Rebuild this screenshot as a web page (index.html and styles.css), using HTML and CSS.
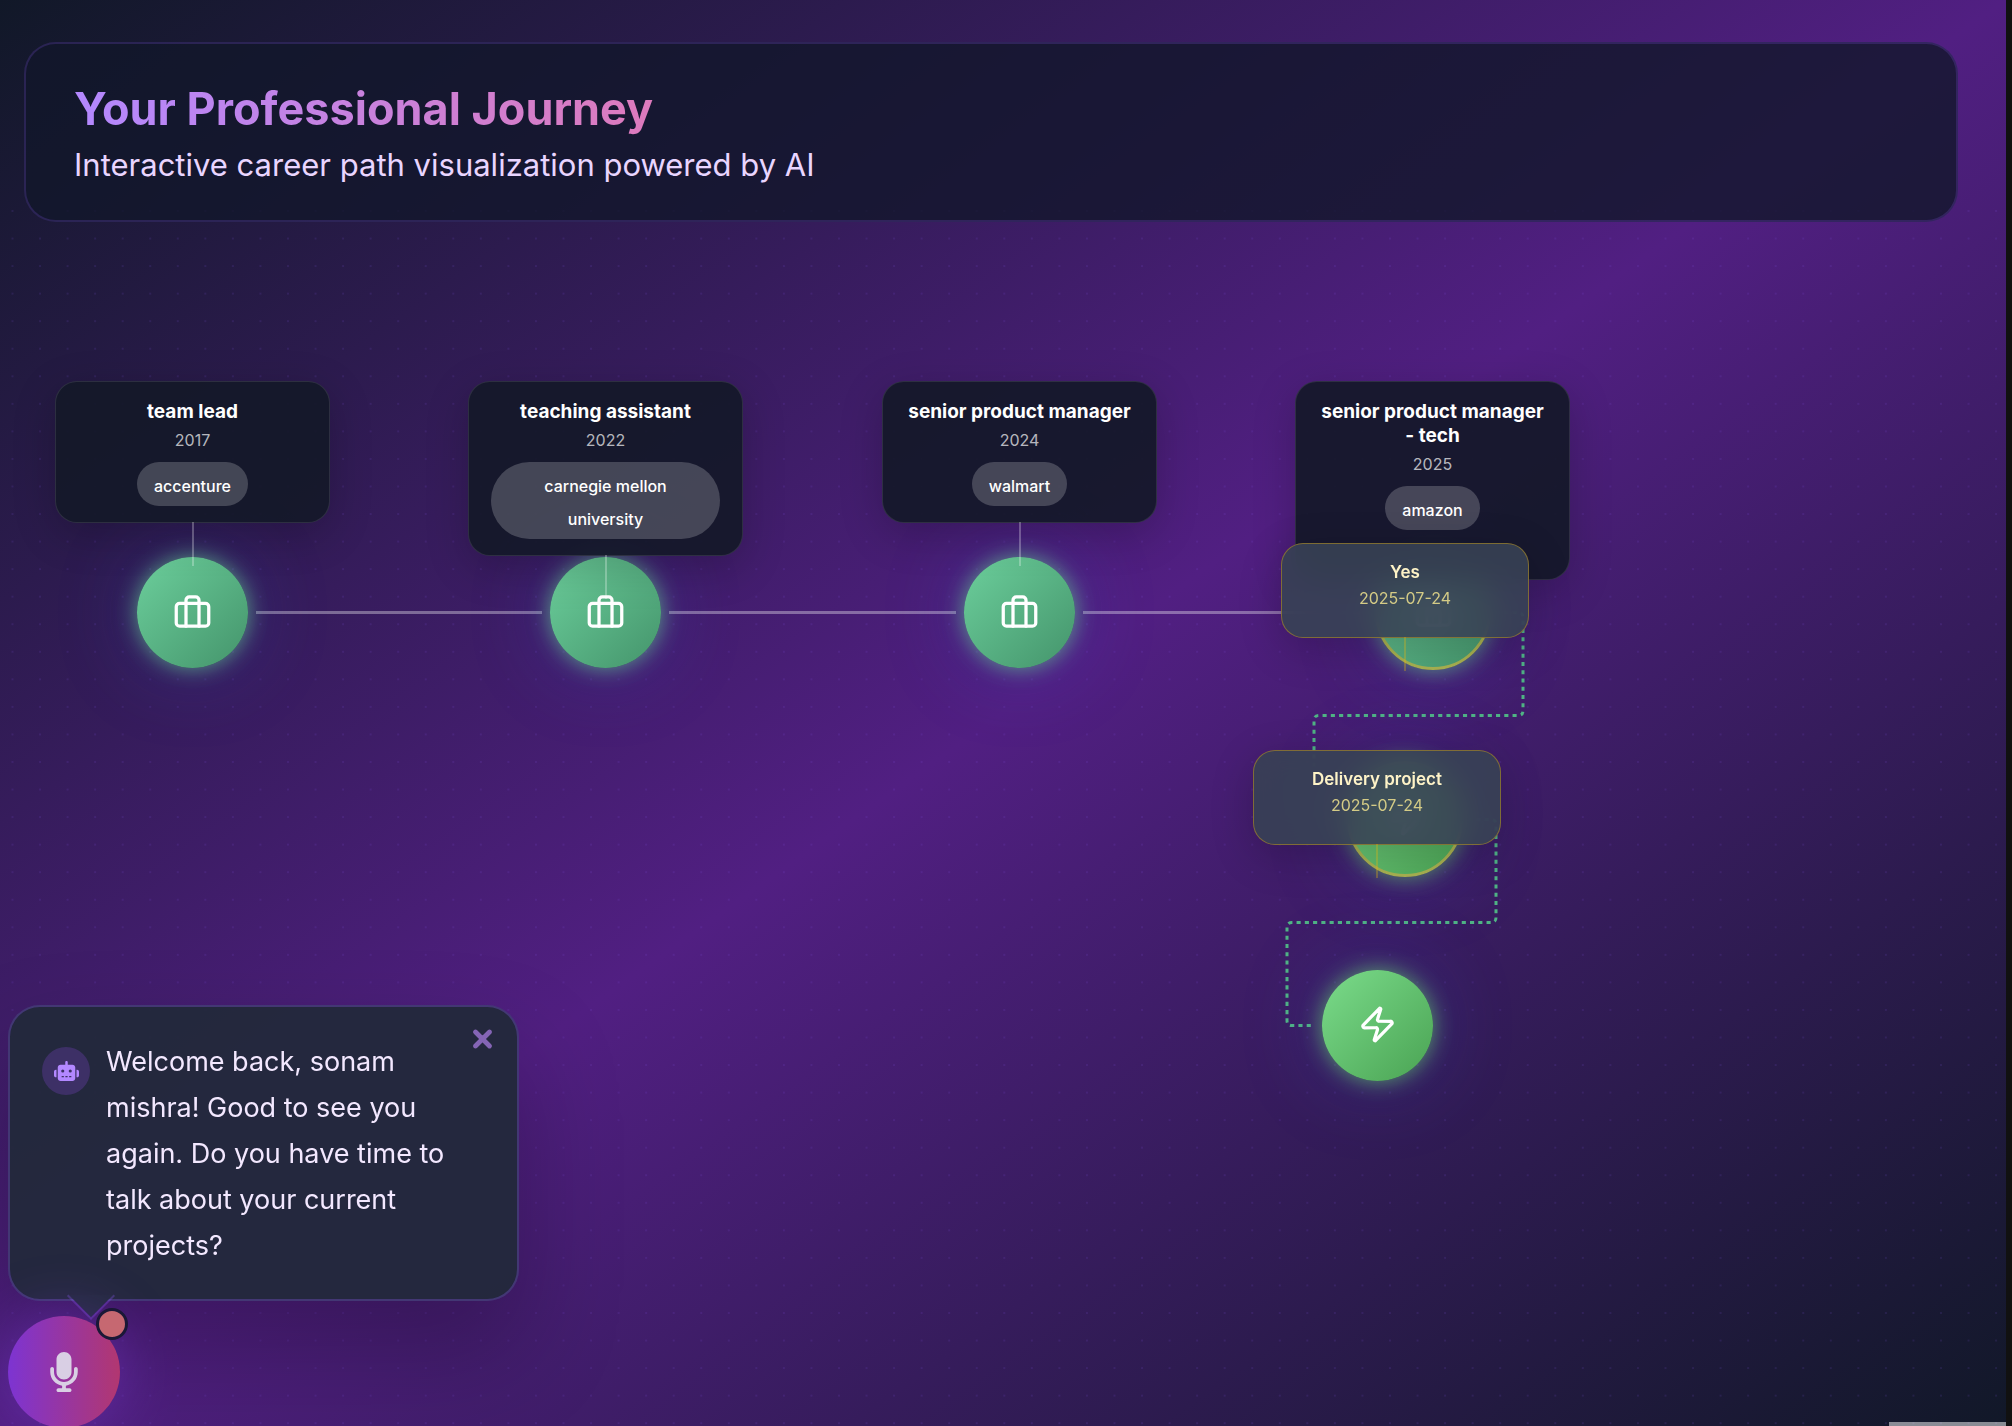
FILE: index.html
```html
<!DOCTYPE html>
<html lang="en">
<head>
<meta charset="utf-8">
<meta name="viewport" content="width=device-width, initial-scale=1">
<title>Your Professional Journey</title>
<link rel="stylesheet" href="styles.css">
</head>
<body>
<svg class="sprite" aria-hidden="true">
  <symbol id="briefcase" viewBox="0 0 24 24"><path d="M16 21V5a2 2 0 0 0-2-2h-4a2 2 0 0 0-2 2v16"/><rect x="2" y="7" width="20" height="14" rx="2"/></symbol>
  <symbol id="zap" viewBox="0 0 24 24"><path d="M4 14a1 1 0 0 1-.78-1.63l9.9-10.2a.5.5 0 0 1 .86.46l-1.92 6.02A1 1 0 0 0 13 10h7a1 1 0 0 1 .78 1.63l-9.9 10.2a.5.5 0 0 1-.86-.46l1.92-6.02A1 1 0 0 0 11 14z"/></symbol>
</svg>
<div class="app">
  <svg class="dots" aria-hidden="true">
    <defs><pattern id="grid" x="11.5" y="11" width="27.55" height="27.55" patternUnits="userSpaceOnUse"><circle cx="1" cy="1" r="1"/></pattern></defs>
    <rect width="100%" height="100%" fill="url(#grid)"/>
  </svg>

  <header class="header">
    <h1 class="title">Your Professional Journey</h1>
    <p class="subtitle">Interactive career path visualization powered by AI</p>
  </header>

  <main class="canvas">
    <svg class="edges" aria-hidden="true">
      <g class="edge" transform="translate(0 .5)">
        <path d="M256 390H542"/><path d="M669 390H956"/><path d="M1083 390H1369"/>
      </g>
      <g class="edge edge-branch" transform="translate(0 .5)">
        <path d="M1496 390H1518Q1523 390 1523 395V488Q1523 493 1518 493H1319Q1314 493 1314 498V592Q1314 597 1319 597H1341"/>
        <path d="M1468 597H1491Q1496 597 1496 602V695Q1496 700 1491 700H1292Q1287 700 1287 705V798Q1287 803 1292 803H1314"/>
      </g>
    </svg>

    <button class="node n1" aria-label="team lead"><svg class="icon"><use href="#briefcase"/></svg></button>
    <button class="node n2" aria-label="teaching assistant"><svg class="icon"><use href="#briefcase"/></svg></button>
    <button class="node n3" aria-label="senior product manager"><svg class="icon"><use href="#briefcase"/></svg></button>
    <button class="node node-current n4" aria-label="senior product manager - tech"><svg class="icon"><use href="#briefcase"/></svg></button>
    <button class="node node-project node-current n5" aria-label="Yes"><svg class="icon"><use href="#zap"/></svg></button>
    <button class="node node-project n6" aria-label="Delivery project"><svg class="icon"><use href="#zap"/></svg></button>

    <article class="card c1"><h2 class="role">team lead</h2><p class="year">2017</p><span class="badge">accenture</span></article>
    <article class="card c2"><h2 class="role">teaching assistant</h2><p class="year">2022</p><span class="badge">carnegie mellon university</span></article>
    <article class="card c3"><h2 class="role">senior product manager</h2><p class="year">2024</p><span class="badge">walmart</span></article>
    <article class="card card-open c4"><h2 class="role">senior product manager - tech</h2><p class="year">2025</p><span class="badge">amazon</span></article>
    <article class="card card-project c5"><h2 class="role">Yes</h2><p class="year">2025-07-24</p></article>
    <article class="card card-project c6"><h2 class="role">Delivery project</h2><p class="year">2025-07-24</p></article>
    <div class="attribution"></div>
  </main>

  <aside class="assistant">
    <button class="mic" aria-label="Talk to the assistant">
      <svg class="mic-icon" viewBox="0 0 384 512"><path d="M192 0C139 0 96 43 96 96V256c0 53 43 96 96 96s96-43 96-96V96c0-53-43-96-96-96zM64 216c0-13.3-10.7-24-24-24s-24 10.7-24 24v40c0 89.1 66.2 162.7 152 174.4V464H120c-13.3 0-24 10.7-24 24s10.7 24 24 24h72 72c13.3 0 24-10.7 24-24s-10.7-24-24-24H216V430.4c85.8-11.7 152-85.3 152-174.4V216c0-13.3-10.7-24-24-24s-24 10.7-24 24v40c0 70.7-57.3 128-128 128s-128-57.3-128-128V216z"/></svg>
      <span class="status"></span>
    </button>
    <section class="bubble">
      <span class="avatar"><svg class="robot" viewBox="0 0 640 512"><path d="M320 0c17.7 0 32 14.3 32 32V96H472c39.8 0 72 32.2 72 72V440c0 39.8-32.2 72-72 72H168c-39.8 0-72-32.2-72-72V168c0-39.8 32.2-72 72-72H288V32c0-17.7 14.3-32 32-32zM208 384c-8.8 0-16 7.2-16 16s7.2 16 16 16h32c8.8 0 16-7.2 16-16s-7.2-16-16-16H208zm96 0c-8.8 0-16 7.2-16 16s7.2 16 16 16h32c8.8 0 16-7.2 16-16s-7.2-16-16-16H304zm96 0c-8.8 0-16 7.2-16 16s7.2 16 16 16h32c8.8 0 16-7.2 16-16s-7.2-16-16-16H400zM264 256a40 40 0 1 0 -80 0 40 40 0 1 0 80 0zm152 40a40 40 0 1 0 0-80 40 40 0 1 0 0 80zM48 224H64V416H48c-26.5 0-48-21.5-48-48V272c0-26.5 21.5-48 48-48zm544 0c26.5 0 48 21.5 48 48v96c0 26.5-21.5 48-48 48H576V224h16z"/></svg></span>
      <p class="message">Welcome back, sonam mishra! Good to see you again. Do you have time to talk about your current projects?</p>
      <button class="close" aria-label="Close"><svg class="close-icon" viewBox="0 0 384 512"><path d="M342.6 150.6c12.5-12.5 12.5-32.8 0-45.3s-32.8-12.5-45.3 0L192 210.7 86.6 105.4c-12.5-12.5-32.8-12.5-45.3 0s-12.5 32.8 0 45.3L146.7 256 41.4 361.4c-12.5 12.5-12.5 32.8 0 45.3s32.8 12.5 45.3 0L192 301.3 297.4 406.6c12.5 12.5 32.8 12.5 45.3 0s12.5-32.8 0-45.3L237.3 256 342.6 150.6z"/></svg></button>
    </section>
  </aside>
</div>
</body>
</html>
```
FILE: styles.css
```css
* { box-sizing: border-box; }

body {
  margin: 0;
  background: #111;
  color: #fff;
  font-family: Inter, "Liberation Sans", sans-serif;
}

h1, h2, p { margin: 0; }

button {
  padding: 0;
  border: 0;
  background: none;
  color: inherit;
  font: inherit;
  cursor: pointer;
}

.sprite { position: absolute; width: 0; height: 0; }

.app {
  position: relative;
  display: flex;
  flex-direction: column;
  min-height: 100vh;
  margin-right: 6px;
  padding-top: 42px;
  overflow: hidden;
  background: linear-gradient(to bottom right, #111828, #511f82 50%, #111828);
}

.dots {
  position: absolute;
  top: 199px;
  left: 0;
  width: 100%;
  height: calc(100% - 199px);
  fill: #8b5cf6;
  opacity: 0.16;
}

/* Header */
.header {
  position: relative;
  margin: 0 48px 0 24px;
  padding: 33px 48px 31px;
  border: 2px solid rgba(139, 92, 246, 0.2);
  border-radius: 32px;
  background: rgba(17, 23, 42, 0.8);
}

.title {
  width: fit-content;
  background: linear-gradient(to right, #b388ff, #dd7abc);
  background-clip: text;
  color: transparent;
  font-size: 45px;
  font-weight: 700;
  line-height: 64px;
}

.subtitle {
  color: #e9d5ff;
  font-size: 31px;
  line-height: 48px;
}

/* Career diagram */
.canvas {
  position: relative;
  flex: 1;
  min-height: 900px;
}

.edges {
  position: absolute;
  inset: 0;
  width: 100%;
  height: 100%;
}

.edge { fill: none; stroke: rgba(255, 255, 255, 0.35); stroke-width: 3; }
.edge-branch { stroke: #50b584; stroke-dasharray: 4.13 4.13; }

.node {
  position: absolute;
  display: flex;
  align-items: center;
  justify-content: center;
  width: 111px;
  height: 111px;
  padding-bottom: 3px;
  border-radius: 50%;
  background: linear-gradient(135deg, #6ccf9c, #44946b);
  box-shadow: 0 0 22px rgba(104, 211, 145, 0.7), 0 0 84px rgba(59, 80, 220, 0.3);
}

.node-project {
  background: linear-gradient(135deg, #7bdc8b, #4aa353);
  box-shadow: 0 0 22px rgba(104, 211, 110, 0.7), 0 0 84px rgba(59, 80, 220, 0.3);
}

.node-current {
  width: 116px;
  height: 116px;
  border: 3px solid #a9b352;
  background-origin: border-box;
}

.icon {
  width: 39px;
  height: 39px;
  fill: none;
  stroke: #fff;
  stroke-width: 2;
  stroke-linecap: round;
  stroke-linejoin: round;
}

.n1 { left: 137px; top: 335px; }
.n2 { left: 550px; top: 335px; }
.n3 { left: 964px; top: 335px; }
.n4 { left: 1375px; top: 332px; }
.n5 { left: 1347px; top: 539px; }
.n6 { left: 1322px; top: 748px; }

.card {
  position: absolute;
  width: 275px;
  padding: 18px 22px 16px;
  border: 1px solid rgba(255, 255, 255, 0.1);
  border-radius: 22px;
  background: rgba(20, 24, 40, 0.92);
  box-shadow: 0 11px 44px rgba(0, 0, 0, 0.2);
  text-align: center;
}

.card::after {
  content: "";
  position: absolute;
  top: 100%;
  left: calc(50% - 1px);
  width: 2px;
  height: 44px;
  background: rgba(255, 255, 255, 0.27);
}

.role { font-size: 19px; font-weight: 700; line-height: 24px; }

.year {
  color: rgba(255, 255, 255, 0.7);
  font-size: 16px;
  line-height: 33px;
}

.badge {
  display: block;
  width: fit-content;
  margin: 5px auto 0;
  padding: 8px 17px 3px;
  border-radius: 40px;
  background: rgba(255, 255, 255, 0.2);
  font-size: 16px;
  font-weight: 500;
  line-height: 33px;
}

.card-open { padding-bottom: 49px; }

.card-project {
  width: 248px;
  padding: 18px 22px 22px;
  border-color: rgba(234, 179, 8, 0.4);
  background: rgba(55, 65, 84, 0.9);
  backdrop-filter: blur(14px);
}

.card-project::after { height: 34px; background: rgba(234, 179, 8, 0.3); }
.card-project .role { color: #fef3c7; font-size: 17px; font-weight: 600; line-height: 20px; }
.card-project .year { color: #d4cb86; }

.c1 { left: 55px; top: 159px; }
.c2 { left: 468px; top: 159px; }
.c3 { left: 882px; top: 159px; }
.c4 { left: 1295px; top: 159px; }
.c5 { left: 1281px; top: 321px; }
.c6 { left: 1253px; top: 528px; }

.attribution {
  position: absolute;
  right: 0;
  bottom: 0;
  width: 117px;
  height: 4px;
  background: rgba(255, 255, 255, 0.5);
}

/* Assistant */
.assistant {
  position: fixed;
  bottom: -2px;
  left: 8px;
  display: flex;
  flex-direction: column-reverse;
  gap: 15px;
}

.bubble {
  position: relative;
  display: flex;
  align-items: flex-start;
  gap: 16px;
  width: 511px;
  padding: 32px 32px 30px;
  border: 2px solid rgba(139, 92, 246, 0.3);
  border-radius: 32px;
  background: rgba(34, 41, 59, 0.96);
  box-shadow: 0 50px 100px rgba(0, 0, 0, 0.25);
}

.bubble::after {
  content: "";
  position: absolute;
  bottom: -14px;
  left: 64px;
  width: 32px;
  height: 32px;
  border: solid rgba(139, 92, 246, 0.3);
  border-width: 0 2px 2px 0;
  background: linear-gradient(135deg, transparent 50%, #252a40 50%);
  transform: rotate(45deg);
}

.avatar {
  display: flex;
  flex: none;
  align-items: center;
  justify-content: center;
  width: 48px;
  height: 48px;
  margin-top: 8px;
  border-radius: 50%;
  background: rgba(139, 72, 226, 0.25);
}

.robot { width: 25px; height: 20px; fill: #b388ff; }

.message {
  padding-right: 24px;
  color: #f3e8ff;
  font-size: 27px;
  line-height: 46px;
}

.close { position: absolute; top: 18px; right: 24px; line-height: 0; }
.close-icon {
  width: 21px;
  height: 28px;
  overflow: visible;
  fill: #8565b5;
  stroke: #8565b5;
  stroke-width: 24;
}

.mic {
  position: relative;
  z-index: 1;
  display: flex;
  align-items: center;
  justify-content: center;
  width: 112px;
  height: 112px;
  border-radius: 50%;
  background: linear-gradient(to right, #7d34d2, #b23770);
  box-shadow: 0 0 60px rgba(139, 72, 246, 0.35);
}

.mic-icon { width: 30px; height: 40px; fill: #d9cfe4; }

.status {
  position: absolute;
  top: -8px;
  right: -8px;
  width: 32px;
  height: 32px;
  border: 3px solid #1a1836;
  border-radius: 50%;
  background: #c66871;
}
```
